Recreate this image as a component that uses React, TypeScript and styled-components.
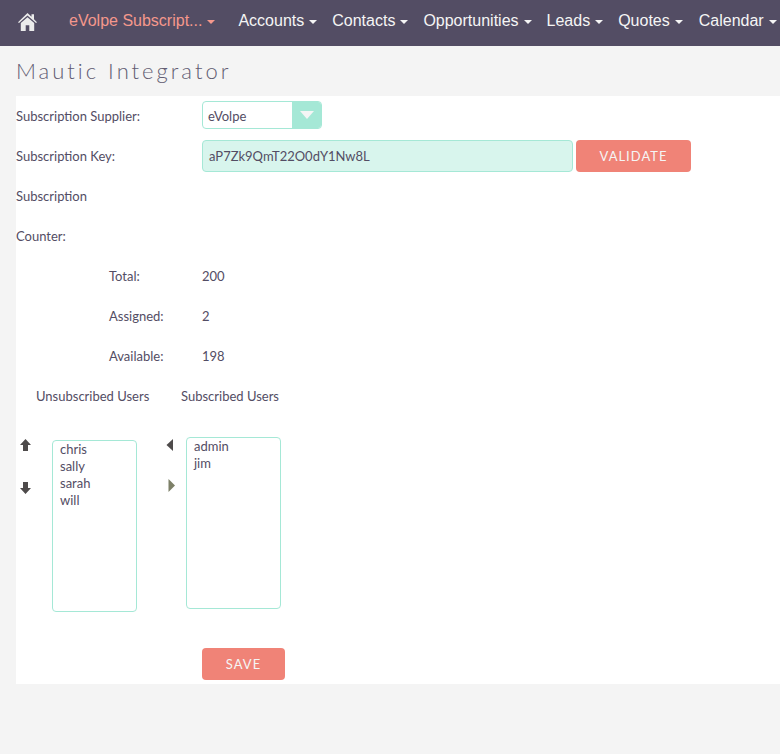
import React from "react";
import styled, { createGlobalStyle } from "styled-components";

const Global = createGlobalStyle`
  html, body { margin: 0; padding: 0; background: #f4f4f4; }
  body { font-family: Lato, "Liberation Sans", sans-serif; font-size: 13px; color: #534d64; overflow: hidden; height: 754px; }
  * { box-sizing: border-box; }
`;

const NavBar = styled.nav`
  height: 46px;
  background: #534d64;
  display: flex;
  align-items: center;
  padding-left: 18px;
  overflow: hidden;
  white-space: nowrap;
`;
const HomeLink = styled.a`
  display: flex;
  flex: none;
  width: 51px;
  color: #ebebeb;
  margin-top: -3px;
`;
const NavItem = styled.a<{ $active?: boolean; $gap: number }>`
  display: inline-flex;
  align-items: center;
  font-family: "Liberation Sans", Arial, sans-serif;
  font-size: 16px;
  margin-top: -4px;
  color: ${(p) => (p.$active ? "#f5988c" : "#f5f5f5")};
  margin-right: ${(p) => p.$gap}px;
  flex: none;
`;
const Caret = styled.span`
  width: 0;
  height: 0;
  margin-left: 5px;
  margin-top: 2px;
  border-top: 4px solid currentColor;
  border-left: 4px solid transparent;
  border-right: 4px solid transparent;
`;
const Title = styled.h1`
  margin: 0;
  height: 50px;
  padding: 11px 0 0 16px;
  font-family: Lato, sans-serif;
  font-weight: 300;
  font-size: 22px;
  line-height: 28px;
  letter-spacing: 3px;
  color: #625c72;
`;
const Panel = styled.main`
  margin-left: 16px;
  height: 588px;
  background: #fff;
`;
const Row = styled.div`
  height: 40px;
  display: grid;
  grid-template-columns: 186px 1fr;
  align-items: center;
`;
const Label = styled.div<{ $indent?: boolean }>`
  padding-left: ${(p) => (p.$indent ? 93 : 0)}px;
  line-height: 20px;
`;
const Value = styled.div`
  display: flex;
  align-items: center;
  line-height: 20px;
`;
const Select = styled.div`
  width: 120px;
  height: 28px;
  margin-bottom: 2px;
  display: flex;
  border: 1px solid #a5e8d6;
  border-radius: 4px;
  overflow: hidden;
  background: #fff;
`;
const SelectText = styled.span`
  flex: 1;
  padding-left: 5px;
  line-height: 28px;
`;
const SelectButton = styled.span`
  width: 29px;
  background: #a5e8d6;
  display: flex;
  align-items: center;
  justify-content: center;
  &::after {
    content: "";
    margin-top: -1px;
    border-top: 8px solid #f5f5f5;
    border-left: 7px solid transparent;
    border-right: 7px solid transparent;
  }
`;
const KeyInput = styled.div`
  width: 371px;
  height: 32px;
  padding-left: 6px;
  line-height: 30px;
  background: #d8f5ed;
  border: 1px solid #a5e8d6;
  border-radius: 4px;
`;
const Button = styled.button<{ $width: number }>`
  width: ${(p) => p.$width}px;
  height: 32px;
  padding: 0;
  border: none;
  border-radius: 4px;
  background: #f08377;
  color: #f5f5f5;
  font-family: Lato, sans-serif;
  font-size: 13px;
  letter-spacing: 1px;
  line-height: 30px;
`;
const ValidateButton = styled(Button)`
  margin-left: 3px;
`;
const HeadingRow = styled.div`
  height: 40px;
  display: flex;
  align-items: center;
  padding-left: 20px;
`;
const HeadingLeft = styled.span`
  width: 145px;
`;
const Lists = styled.div`
  display: flex;
  align-items: flex-start;
  height: 232px;
`;
const ArrowColumn = styled.div<{ $width: number; $left: number; $top: number; $gap: number }>`
  width: ${(p) => p.$width}px;
  padding: ${(p) => p.$top}px 0 0 ${(p) => p.$left}px;
  display: flex;
  flex-direction: column;
  gap: ${(p) => p.$gap}px;
  flex: none;
`;
const ArrowIcon = styled.svg`
  display: block;
`;
const ListBox = styled.ul<{ $width: number; $top: number; $pad: number }>`
  list-style: none;
  margin: ${(p) => p.$top}px 0 0;
  padding: 0 0 0 ${(p) => p.$pad}px;
  width: ${(p) => p.$width}px;
  height: 172px;
  border: 1px solid #a5e8d6;
  border-radius: 4px;
  flex: none;
  line-height: 17px;
`;
const SaveRow = styled.div`
  padding-left: 186px;
`;

const Up = () => (
  <ArrowIcon width="13" height="13" viewBox="0 0 13 13">
    <path d="M6.5 0 L12 6 H9 V12 H4 V6 H1 Z" fill="#4e4b4b" />
  </ArrowIcon>
);
const Down = () => (
  <ArrowIcon width="13" height="13" viewBox="0 0 13 13">
    <path d="M6.5 12 L12 6 H9 V0 H4 V6 H1 Z" fill="#4e4b4b" />
  </ArrowIcon>
);
const Tri = ({ dir, color }: { dir: "l" | "r"; color: string }) => (
  <ArrowIcon width="11" height="13" viewBox="0 0 11 13">
    <path d={dir === "l" ? "M8 0 V12 L1.5 6 Z" : "M3.5 0 V13 L10 6.5 Z"} fill={color} />
  </ArrowIcon>
);

const items: [string, number][] = [
  ["Accounts", 15],
  ["Contacts", 15],
  ["Opportunities", 15],
  ["Leads", 15],
  ["Quotes", 16],
  ["Calendar", 16],
];

export default function App() {
  return (
    <>
      <Global />
      <NavBar>
        <HomeLink>
          <svg width="19" height="19" viewBox="0 0 19 19" fill="currentColor">
            <path d="M9.5 1 L13.5 4.8 V2.2 H16 V7.2 L19 10.2 L18 11 L9.5 3.6 L1 11 L0 10.2 Z" />
            <path d="M9.5 5.2 L16.2 11 V19 H11.3 V13.2 H7.7 V19 H2.8 V11 Z" />
          </svg>
        </HomeLink>
        <NavItem $active $gap={23}>
          eVolpe Subscript...<Caret />
        </NavItem>
        {items.map(([t, g]) => (
          <NavItem key={t} $gap={g}>
            {t}
            <Caret />
          </NavItem>
        ))}
      </NavBar>
      <Title>Mautic Integrator</Title>
      <Panel>
        <Row>
          <Label>Subscription Supplier:</Label>
          <Value>
            <Select>
              <SelectText>eVolpe</SelectText>
              <SelectButton />
            </Select>
          </Value>
        </Row>
        <Row>
          <Label>Subscription Key:</Label>
          <Value>
            <KeyInput>aP7Zk9QmT22O0dY1Nw8L</KeyInput>
            <ValidateButton $width={115}>VALIDATE</ValidateButton>
          </Value>
        </Row>
        <Row>
          <Label>Subscription</Label>
        </Row>
        <Row>
          <Label>Counter:</Label>
        </Row>
        <Row>
          <Label $indent>Total:</Label>
          <Value>200</Value>
        </Row>
        <Row>
          <Label $indent>Assigned:</Label>
          <Value>2</Value>
        </Row>
        <Row>
          <Label $indent>Available:</Label>
          <Value>198</Value>
        </Row>
        <HeadingRow>
          <HeadingLeft>Unsubscribed Users</HeadingLeft>
          <span>Subscribed Users</span>
        </HeadingRow>
        <Lists>
          <ArrowColumn $width={36} $left={3} $top={23} $gap={30}>
            <Up />
            <Down />
          </ArrowColumn>
          <ListBox $width={85} $top={24} $pad={7}>
            <li>chris</li>
            <li>sally</li>
            <li>sarah</li>
            <li>will</li>
          </ListBox>
          <ArrowColumn $width={49} $left={28} $top={23} $gap={27}>
            <Tri dir="l" color="#4e4b4b" />
            <Tri dir="r" color="#7d8068" />
          </ArrowColumn>
          <ListBox $width={95} $top={21} $pad={7}>
            <li>admin</li>
            <li>jim</li>
          </ListBox>
        </Lists>
        <SaveRow>
          <Button $width={83}>SAVE</Button>
        </SaveRow>
      </Panel>
    </>
  );
}
